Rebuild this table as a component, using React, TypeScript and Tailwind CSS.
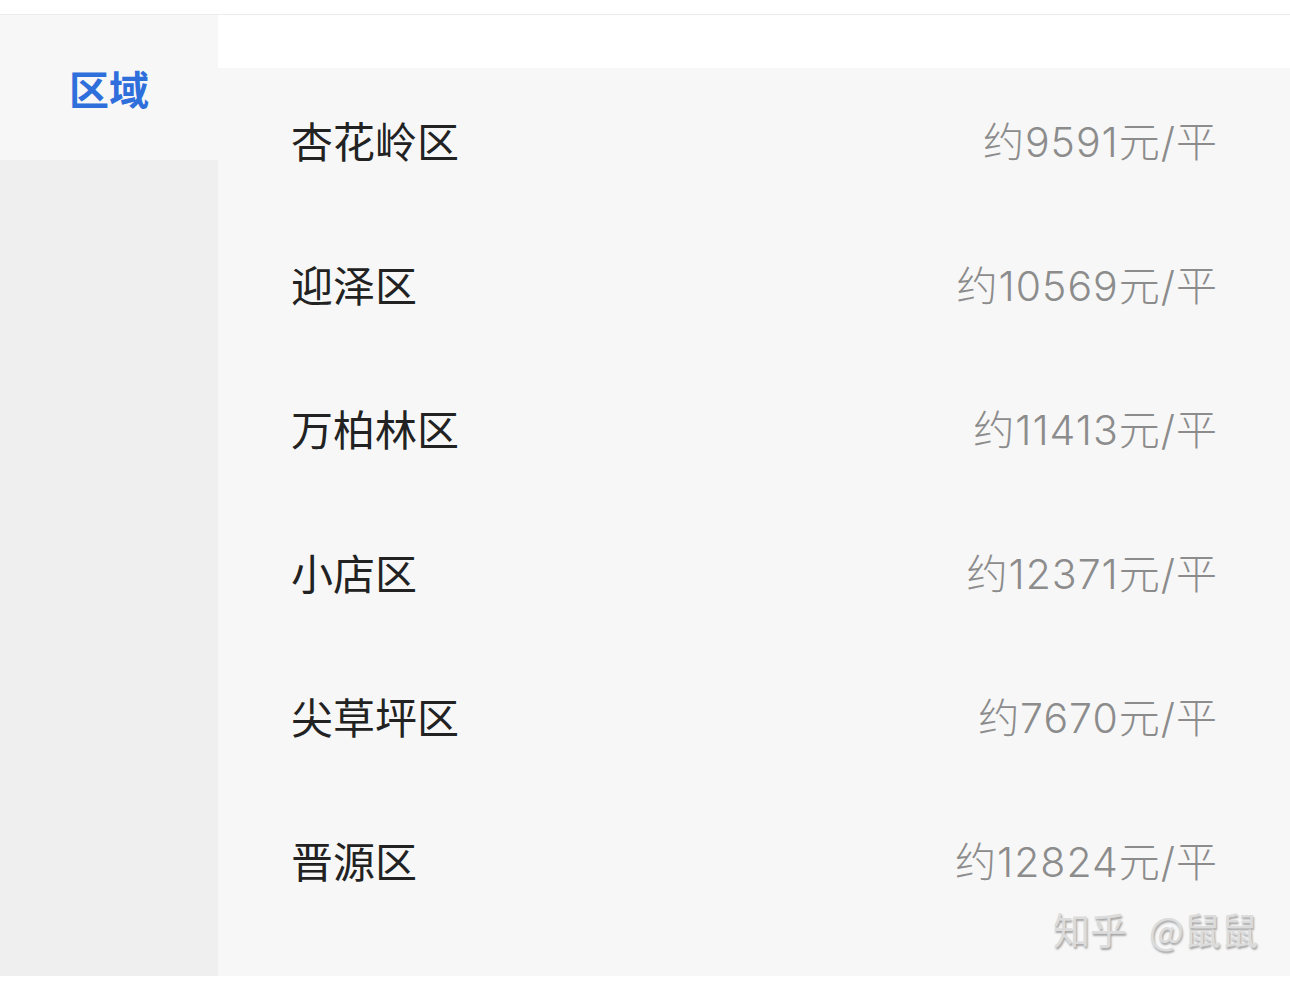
import React from "react";

const rows = [
  { name: "杏花岭区", price: "约9591元/平" },
  { name: "迎泽区", price: "约10569元/平" },
  { name: "万柏林区", price: "约11413元/平" },
  { name: "小店区", price: "约12371元/平" },
  { name: "尖草坪区", price: "约7670元/平" },
  { name: "晋源区", price: "约12824元/平" },
];

export default function App() {
  return (
    <div
      className="w-[1290px] h-[982px] bg-white flex flex-col overflow-hidden"
      style={{ fontFamily: '"Noto Sans CJK SC", "Noto Sans", sans-serif' }}
    >
      <div className="h-[15px] bg-white border-b border-[#ececec] shrink-0" />
      <div className="flex h-[961px] shrink-0">
        <aside className="w-[218px] bg-[#efefef] flex flex-col">
          <div className="h-[145px] bg-[#f7f7f7] flex items-center justify-center">
            <span className="text-[40px] font-bold text-[#2f6fdc] leading-none">区域</span>
          </div>
        </aside>
        <main className="flex-1 flex flex-col">
          <div className="h-[53px] bg-white shrink-0" />
          <div className="flex-1 bg-[#f7f7f7] relative">
            {rows.map(r => (
              <div key={r.name} className="h-[144px] flex items-center justify-between pl-[73px] pr-[72px]">
                <span className="text-[42px] text-[#222] leading-none">{r.name}</span>
                <span className="text-[41px] text-[#8c8c8c] leading-none font-light tracking-[1px] pt-[4px] [font-family:Inter,'Noto_Sans_CJK_SC',sans-serif]">
                  {r.price}
                </span>
              </div>
            ))}
            <div className="absolute right-[32px] bottom-[28px] flex gap-[22px] text-[37px] text-[#dcdcdc] leading-none [text-shadow:1px_2px_2px_rgba(0,0,0,0.35)]">
              <span>知乎</span>
              <span>@鼠鼠</span>
            </div>
          </div>
        </main>
      </div>
    </div>
  );
}
